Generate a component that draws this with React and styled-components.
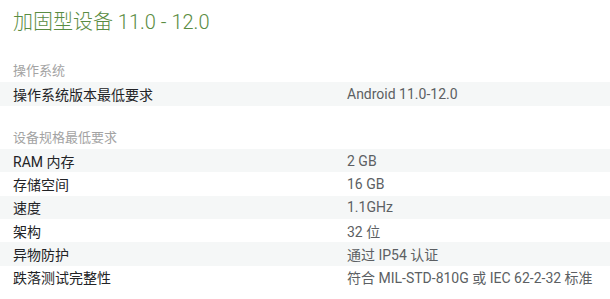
import React from "react";
import styled, { createGlobalStyle } from "styled-components";

const GlobalStyle = createGlobalStyle`
  html, body {
    margin: 0;
    padding: 0;
    background: #ffffff;
  }
  body {
    font-family: Roboto, "Noto Sans CJK SC", sans-serif;
    -webkit-font-smoothing: antialiased;
  }
`;

const Page = styled.div`
  width: 610px;
  overflow: hidden;
  padding-top: 8px;
`;

const Title = styled.h1`
  margin: 0 0 23px 13px;
  font-size: 20px;
  line-height: 28px;
  font-weight: 300;
  color: #5a8c42;
  white-space: nowrap;
`;

const Section = styled.section`
  margin-bottom: 20px;
`;

const SectionHeading = styled.h2`
  margin: 0;
  padding-left: 13px;
  font-size: 13px;
  line-height: 23.33px;
  font-weight: 400;
  color: #a3a3a3;
`;

const Row = styled.div`
  display: grid;
  grid-template-columns: 333px 1fr;
  height: 23.33px;
  align-items: center;
  font-size: 14px;
  background: ${(p) => (p.$striped ? "#f5f7f7" : "transparent")};
`;

const Label = styled.div`
  padding-left: 13px;
  color: #222326;
  white-space: nowrap;
`;

const Value = styled.div`
  padding-left: 14px;
  color: #5c5f63;
  white-space: nowrap;
`;

const sections = [
  {
    heading: "操作系统",
    rows: [["操作系统版本最低要求", "Android 11.0-12.0"]],
  },
  {
    heading: "设备规格最低要求",
    rows: [
      ["RAM 内存", "2 GB"],
      ["存储空间", "16 GB"],
      ["速度", "1.1GHz"],
      ["架构", "32 位"],
      ["异物防护", "通过 IP54 认证"],
      ["跌落测试完整性", "符合 MIL-STD-810G 或 IEC 62-2-32 标准"],
    ],
  },
];

export default function App() {
  return (
    <>
      <GlobalStyle />
      <Page>
        <Title>加固型设备 11.0 - 12.0</Title>
        {sections.map((section) => (
          <Section key={section.heading}>
            <SectionHeading>{section.heading}</SectionHeading>
            {section.rows.map(([label, value], i) => (
              <Row key={label} $striped={i % 2 === 0}>
                <Label>{label}</Label>
                <Value>{value}</Value>
              </Row>
            ))}
          </Section>
        ))}
      </Page>
    </>
  );
}
